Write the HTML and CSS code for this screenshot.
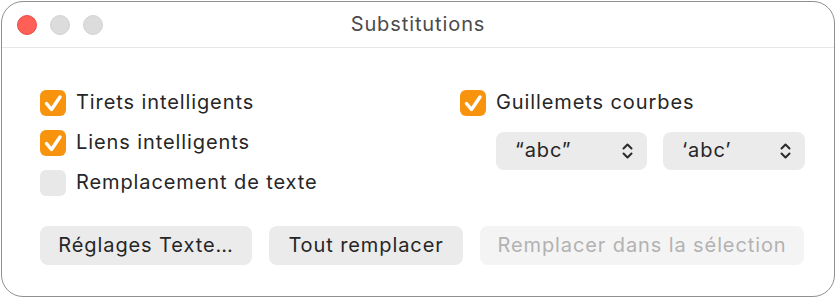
FILE: index.html
```html
<!DOCTYPE html>
<html lang="fr">
<head>
<meta charset="utf-8">
<title>Substitutions</title>
<link rel="stylesheet" href="styles.css">
</head>
<body>
<div class="window">
  <div class="titlebar">
    <div class="lights">
      <span class="light red"></span>
      <span class="light"></span>
      <span class="light"></span>
    </div>
    <div class="title">Substitutions</div>
  </div>
  <div class="content">
    <div class="columns">
      <div class="col left">
        <div class="row">
          <span class="cb on"><svg viewBox="0 0 26 26" width="26" height="26"><path d="M6.5 13.5 L11.5 19.5 L20 7" fill="none" stroke="#fff" stroke-width="3.4" stroke-linecap="round" stroke-linejoin="round"/></svg></span>
          <span class="label">Tirets intelligents</span>
        </div>
        <div class="row">
          <span class="cb on"><svg viewBox="0 0 26 26" width="26" height="26"><path d="M6.5 13.5 L11.5 19.5 L20 7" fill="none" stroke="#fff" stroke-width="3.4" stroke-linecap="round" stroke-linejoin="round"/></svg></span>
          <span class="label">Liens intelligents</span>
        </div>
        <div class="row">
          <span class="cb"></span>
          <span class="label">Remplacement de texte</span>
        </div>
      </div>
      <div class="col right">
        <div class="row">
          <span class="cb on"><svg viewBox="0 0 26 26" width="26" height="26"><path d="M6.5 13.5 L11.5 19.5 L20 7" fill="none" stroke="#fff" stroke-width="3.4" stroke-linecap="round" stroke-linejoin="round"/></svg></span>
          <span class="label">Guillemets courbes</span>
        </div>
        <div class="popups">
          <div class="popup p1">
            <span class="ptext">“abc”</span>
            <svg class="chev" viewBox="0 0 11 16" width="11" height="16"><path d="M1.5 5.5 L5.5 1.5 L9.5 5.5 M1.5 10.5 L5.5 14.5 L9.5 10.5" fill="none" stroke="#2b2b2b" stroke-width="2" stroke-linecap="round" stroke-linejoin="round"/></svg>
          </div>
          <div class="popup p2">
            <span class="ptext">‘abc’</span>
            <svg class="chev" viewBox="0 0 11 16" width="11" height="16"><path d="M1.5 5.5 L5.5 1.5 L9.5 5.5 M1.5 10.5 L5.5 14.5 L9.5 10.5" fill="none" stroke="#2b2b2b" stroke-width="2" stroke-linecap="round" stroke-linejoin="round"/></svg>
          </div>
        </div>
      </div>
    </div>
    <div class="buttons">
      <button class="btn b1">Réglages Texte…</button>
      <button class="btn b2">Tout remplacer</button>
      <button class="btn b3 disabled">Remplacer dans la sélection</button>
    </div>
  </div>
</div>
</body>
</html>
```
FILE: styles.css
```css
html, body {
  margin: 0;
  padding: 0;
  background: #ffffff;
}
body {
  font-family: Inter, "Noto Sans", "Liberation Sans", sans-serif;
  color: #262626;
}
.window {
  box-sizing: border-box;
  margin: 1px 0 0 1px;
  width: 834px;
  height: 296px;
  border: 1px solid #8f8f8f;
  border-radius: 22px;
  background: #ffffff;
  overflow: hidden;
}
.titlebar {
  position: relative;
  height: 45px;
  border-bottom: 1px solid #e6e6e6;
  display: flex;
  align-items: center;
  justify-content: center;
}
.lights {
  position: absolute;
  left: 15px;
  top: 13px;
  display: flex;
  gap: 13px;
}
.light {
  width: 20px;
  height: 20px;
  border-radius: 50%;
  background: #dcdcdc;
  box-sizing: border-box;
  border: 1px solid #d2d2d2;
}
.light.red {
  background: #fe5f57;
  border-color: #e94c45;
}
.title {
  font-size: 20px;
  color: #4b4b4b;
  letter-spacing: 0.9px;
  margin: 0 0 2px 0;
}
.content {
  padding: 35px 0 0 38px;
}
.columns {
  display: flex;
}
.col.left {
  width: 420px;
}
.row {
  height: 40px;
  display: flex;
  align-items: center;
  gap: 10px;
}
.cb {
  width: 26px;
  height: 26px;
  border-radius: 6px;
  background: #e8e8e8;
  flex: none;
  display: block;
}
.cb.on {
  background: #f8930e;
}
.cb svg {
  display: block;
}
.label {
  font-size: 20px;
  letter-spacing: 0.9px;
  margin-top: -2px;
}
.popups {
  display: flex;
  gap: 16px;
  margin: 9px 0 0 36px;
}
.popup {
  box-sizing: border-box;
  height: 38px;
  border-radius: 8px;
  background: #ebebeb;
  display: flex;
  align-items: center;
  justify-content: space-between;
  padding: 0 14px 0 19px;
}
.p1 { width: 151px; }
.p2 { width: 142px; }
.ptext {
  font-size: 20px;
  letter-spacing: 0.9px;
  margin-top: -2px;
}
.chev {
  display: block;
}
.buttons {
  display: flex;
  gap: 17px;
  margin-top: 23px;
}
.btn {
  box-sizing: border-box;
  height: 39px;
  border: none;
  border-radius: 8px;
  background: #ebebeb;
  font-family: inherit;
  font-size: 20px;
  letter-spacing: 0.9px;
  color: #262626;
  padding: 0 0 2px 0;
}
.b1 { width: 212px; }
.b2 { width: 194px; }
.b3 { width: 324px; }
.btn.disabled {
  background: #f4f4f4;
  color: #b2b2b2;
}
```
